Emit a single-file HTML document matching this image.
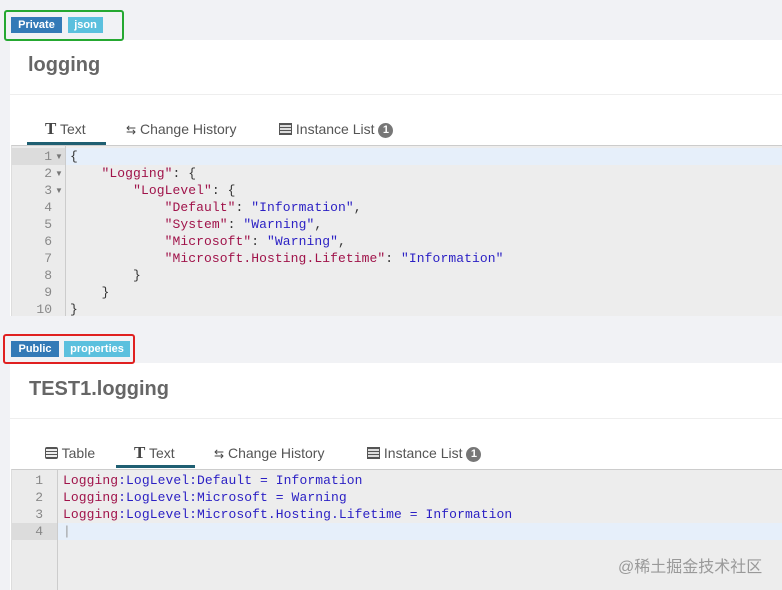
<!DOCTYPE html>
<html><head><meta charset="utf-8"><style>
*{margin:0;padding:0;box-sizing:border-box}
body{width:782px;height:590px;overflow:hidden;background:#f1f2f5;font-family:"Liberation Sans",Arial,sans-serif;position:relative}
.abs{position:absolute}
.badge{position:absolute;color:#fff;font-weight:bold;font-size:11px;line-height:16px;text-align:center}
.panel{position:absolute;left:10px;right:0;background:#fff}
.title{position:absolute;font-size:20px;font-weight:bold;color:#666}
.sep{position:absolute;left:10px;right:0;height:1px;background:#eee}
.tab{position:absolute;font-size:14px;color:#555;white-space:nowrap}
.ul{position:absolute;height:3px;background:#1f5f72}
.ed{position:absolute;left:11px;right:0;background:#ededed;border-top:1px solid #ccc;border-left:1px solid #ddd}
.gut{position:absolute;left:0;top:0;bottom:0;background:#ebebeb;border-right:1px solid #ccc}
.code{position:absolute;font-family:"Liberation Mono",monospace;font-size:13px;line-height:17px;white-space:pre;letter-spacing:0.08px}
.ln{position:absolute;font-family:"Liberation Mono",monospace;font-size:13px;line-height:17px;color:#888;text-align:right}
.k{color:#a0134a}.s{color:#2a1fc4}.p{color:#333}
.cnt{display:inline-block;width:15px;height:15px;border-radius:50%;background:#777;color:#fff;font-size:11px;font-weight:bold;text-align:center;line-height:15px;vertical-align:1px}
</style></head><body>
<div class="panel" style="top:40px;height:276px"></div>
<div class="abs" style="left:4px;top:10px;width:120px;height:31px;border:2px solid #25a831;border-radius:3px"></div>
<div class="badge" style="left:11px;top:17px;width:51px;background:#337ab7">Private</div>
<div class="badge" style="left:68px;top:17px;width:35px;background:#5bc0de">json</div>
<div class="title" style="left:28px;top:54px">logging</div>
<div class="sep" style="top:94px"></div>
<div class="tab" style="left:45px;top:119px"><b style="font-family:'Liberation Serif',serif;font-size:17px;color:#444">T</b> Text</div>
<div class="tab" style="left:126px;top:121px"><span style="font-size:12px;color:#444">⇆</span> Change History</div>
<div class="tab" style="left:279px;top:121px"><span style="display:inline-block;width:13px;height:12px;border:1px solid #555;background:repeating-linear-gradient(#555 0 1px,#ddd 1px 3px);vertical-align:-1px"></span> Instance List <span class="cnt">1</span></div>
<div class="ul" style="left:27px;top:142px;width:79px"></div>
<div class="ed" style="top:145px;height:171px">
 <div class="abs" style="left:0;right:0;top:2px;height:17px;background:#e6effa"></div>
 <div class="gut" style="width:54px"><div class="abs" style="left:0;right:0;top:2px;height:17px;background:#dcdcdc"></div></div>
 <div class="ln" style="left:0;width:40px;top:2px">1<br>2<br>3<br>4<br>5<br>6<br>7<br>8<br>9<br>10</div>
 <div class="abs" style="left:43px;top:2px;font-size:8px;line-height:17px;color:#777">▼<br>▼<br>▼</div>
 <div class="code p" style="left:58px;top:2px">{
    <span class="k">"Logging"</span>: {
        <span class="k">"LogLevel"</span>: {
            <span class="k">"Default"</span>: <span class="s">"Information"</span>,
            <span class="k">"System"</span>: <span class="s">"Warning"</span>,
            <span class="k">"Microsoft"</span>: <span class="s">"Warning"</span>,
            <span class="k">"Microsoft.Hosting.Lifetime"</span>: <span class="s">"Information"</span>
        }
    }
}</div>
</div>

<div class="panel" style="top:363px;height:227px"></div>
<div class="abs" style="left:3px;top:334px;width:132px;height:30px;border:2px solid #e02020;border-radius:3px"></div>
<div class="badge" style="left:11px;top:341px;width:48px;background:#337ab7">Public</div>
<div class="badge" style="left:64px;top:341px;width:66px;background:#5bc0de">properties</div>
<div class="title" style="left:29px;top:378px">TEST1.logging</div>
<div class="sep" style="top:418px"></div>
<div class="tab" style="left:45px;top:445px"><span style="display:inline-block;width:13px;height:12px;border:1px solid #555;border-radius:2px;background:repeating-linear-gradient(#555 0 1px,#eee 1px 3px);vertical-align:-1px"></span> Table</div>
<div class="tab" style="left:134px;top:443px"><b style="font-family:'Liberation Serif',serif;font-size:17px;color:#444">T</b> Text</div>
<div class="tab" style="left:214px;top:445px"><span style="font-size:12px;color:#444">⇆</span> Change History</div>
<div class="tab" style="left:367px;top:445px"><span style="display:inline-block;width:13px;height:12px;border:1px solid #555;background:repeating-linear-gradient(#555 0 1px,#ddd 1px 3px);vertical-align:-1px"></span> Instance List <span class="cnt">1</span></div>
<div class="ul" style="left:116px;top:465px;width:79px"></div>
<div class="ed" style="top:469px;height:121px">
 <div class="abs" style="left:0;right:0;top:53px;height:17px;background:#e6effa"></div>
 <div class="gut" style="width:46px"><div class="abs" style="left:0;right:0;top:53px;height:17px;background:#dcdcdc"></div></div>
 <div class="ln" style="left:0;width:31px;top:2px">1<br>2<br>3<br>4</div>
 <div class="code" style="left:51px;top:2px"><span class="k">Logging</span><span class="s">:LogLevel:Default = Information</span>
<span class="k">Logging</span><span class="s">:LogLevel:Microsoft = Warning</span>
<span class="k">Logging</span><span class="s">:LogLevel:Microsoft.Hosting.Lifetime = Information</span>
<span style="color:#999">|</span></div>
</div>
<div class="abs" style="left:618px;top:553px;font-size:16px;color:#999;font-family:'Liberation Sans','Noto Sans CJK SC',sans-serif">@稀土掘金技术社区</div>
</body></html>
